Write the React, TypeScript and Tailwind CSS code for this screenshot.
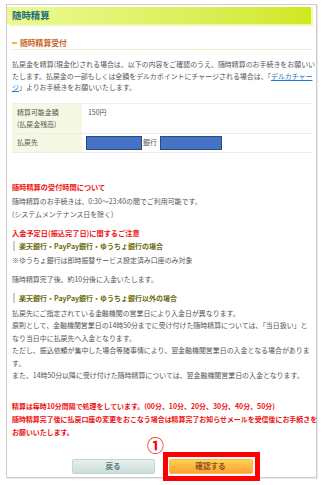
import React from "react";

const jp = "font-['Noto_Sans_CJK_JP','Noto_Sans',sans-serif]";

const SubHead = ({ children }: { children: React.ReactNode }) => (
  <div className="flex items-center h-[13px] pl-[1px]">
    <div className="w-[2px] h-[10px] bg-[#cfcfcf] mr-[4px]" />
    <span className="text-[7px] font-bold text-[#6b6b10] leading-[13px]">{children}</span>
  </div>
);

export default function App() {
  return (
    <div className={`w-[324px] h-[485px] bg-white relative ${jp}`}>
      <div className="absolute left-[6px] top-[4px] w-[311px] h-[474px] border border-[#cccccc] shadow-[1px_1px_1px_rgba(0,0,0,0.08)]">
        {/* header bar */}
        <div className="mt-[2px] w-[304px] h-[17px] bg-gradient-to-r from-[#eefa90] to-[#cfe81c] shadow-[2px_2px_0_#eef8b0] flex items-center pl-[5px]">
          <span className="text-[9.4px] font-bold text-[#22707a] leading-none">随時精算</span>
        </div>

        <div className="pl-[5px] pr-[1px] text-[#555555] text-[6.95px] leading-[11.5px] whitespace-nowrap">
          {/* section heading */}
          <div className="mt-[13px] w-[300px] h-[13px] flex items-center border-b border-[#f7ecd2] pb-[1px]">
            <div className="w-[5px] h-[2px] bg-[#f2b243] mr-[3px]" />
            <span className="text-[7.8px] font-bold text-[#c4661e] leading-none">随時精算受付</span>
          </div>

          <p className="mt-[9px]">
            払戻金を精算(現金化)される場合は、以下の内容をご確認のうえ、随時精算のお手続きをお願いい
            <br />
            たします。払戻金の一部もしくは全額をデルカポイントにチャージされる場合は、「
            <span className="text-[#2277cc] underline">デルカチャー</span>
            <br />
            <span className="text-[#2277cc] underline">ジ</span>」よりお手続きをお願いいたします。
          </p>

          {/* table */}
          <div className="mt-[9px] w-[300px] border-t border-[#f0f0f0]">
            <div className="flex border-b border-[#ececec] h-[30px]">
              <div className="w-[70px] bg-[#f5f9e4] pl-[5px] pt-[2px] leading-[12px]">
                精算可能金額
                <br />
                (払戻金残高)
              </div>
              <div className="pl-[6px] pt-[2px] leading-[12px]">150円</div>
            </div>
            <div className="flex border-b border-[#ececec] h-[19px]">
              <div className="w-[70px] bg-[#f5f9e4] pl-[5px] flex items-center">払戻先</div>
              <div className="flex items-center pl-[4px]">
                <div className="w-[56px] h-[14px] bg-[#4472c4] border border-[#2c4a80]" />
                <span className="mx-[1px]">銀行</span>
                <div className="w-[62px] h-[14px] bg-[#4472c4] border border-[#2c4a80] ml-[2px]" />
              </div>
            </div>
          </div>

          <div className="mt-[28px] leading-[12.5px]">
            <div className="font-bold text-[#ee1111] text-[7.2px]">随時精算の受付時間について</div>
            <div className="mt-[2px]">随時精算のお手続きは、0:30～23:40の間でご利用可能です。</div>
            <div>(システムメンテナンス日を除く)</div>

            <div className="mt-[7px] font-bold text-[#ee1111] text-[7.2px]">入金予定日(振込完了日)に関するご注意</div>
            <SubHead>楽天銀行・PayPay銀行・ゆうちょ銀行の場合</SubHead>
            <div className="mt-[1px]">※ゆうちょ銀行は即時振替サービス設定済み口座のみ対象</div>
            <div className="mt-[7px]">随時精算完了後、約10分後に入金いたします。</div>
            <div className="mt-[6px]">
              <SubHead>楽天銀行・PayPay銀行・ゆうちょ銀行以外の場合</SubHead>
            </div>
            <div className="mt-[2px]">
              払戻先にご指定されている金融機関の営業日により入金日が異なります。
              <br />
              原則として、金融機関営業日の14時50分までに受け付けた随時精算については、「当日扱い」と
              <br />
              なり当日中に払戻先へ入金となります。
              <br />
              ただし、振込依頼が集中した場合等諸事情により、翌金融機関営業日の入金となる場合がありま
              <br />
              す。
              <br />
              また、14時50分以降に受け付けた随時精算については、翌金融機関営業日の入金となります。
            </div>

            <div className="mt-[18px] font-bold text-[#ee1111] leading-[13px]">
              精算は毎時10分間隔で処理をしています。(00分、10分、20分、30分、40分、50分)
              <br />
              随時精算完了後に払戻口座の変更をおこなう場合は精算完了お知らせメールを受信後にお手続きを
              <br />
              お願いいたします。
            </div>
          </div>

          {/* buttons */}
          <div className="mt-[20px] w-[304px] flex justify-center gap-[14px] pr-[4px]">
            <button className="w-[83px] h-[15px] rounded-[2px] bg-gradient-to-b from-[#e6f0ee] to-[#cddfdb] border border-[#c4d6d2] text-[7.6px] font-bold text-[#5d7f7c] leading-none">
              戻る
            </button>
            <button className="w-[84px] h-[15px] rounded-[2px] bg-gradient-to-b from-[#ffd24c] to-[#ff9f38] border border-[#f5b660] text-[7.6px] font-bold text-[#8a5020] leading-none">
              確認する
            </button>
          </div>
        </div>
      </div>

      {/* annotation overlay */}
      <div className="absolute left-[163px] top-[452px] w-[97px] h-[29px] border-[5px] border-[#ff0000]" />
      <div className="absolute left-[146px] top-[435px] w-[19px] h-[19px] flex items-center justify-center text-[17px] leading-none text-[#ff0000] font-bold">
        ①
      </div>
    </div>
  );
}
